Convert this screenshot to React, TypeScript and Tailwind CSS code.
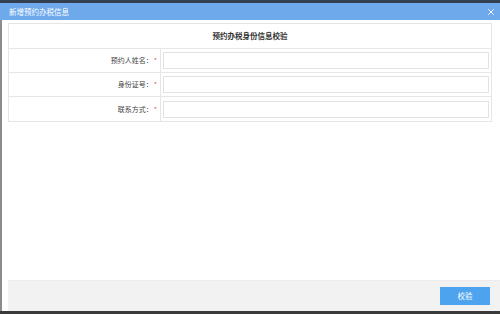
import { X } from 'lucide-react';

const rows = ['预约人姓名：', '身份证号：', '联系方式：'];

export default function App() {
  return (
    <div
      className="w-[500px] h-[314px] flex flex-col bg-white overflow-hidden"
      style={{ fontFamily: '"Noto Sans CJK SC", "Liberation Sans", sans-serif' }}
    >
      <div className="h-[3px] bg-[#34404f]" />
      <div className="h-[17px] flex items-center justify-between pl-[9px] pr-[4px] bg-[#6ea9ec] text-white text-[7.5px]">
        <span>新增预约办税信息</span>
        <X size={10} strokeWidth={2.2} />
      </div>
      <div className="flex-1 flex border-l-[2px] border-[#8c8c8c]">
        <div className="flex-1 flex flex-col">
          <div className="flex-1 pt-[3px] pl-[6px] pr-[8px]">
            <div className="border border-[#e6e6e6]">
              <div className="h-[25px] flex items-center justify-center text-[7.5px] font-bold text-[#333] border-b border-[#e6e6e6]">
                预约办税身份信息校验
              </div>
              {rows.map((label, i) => (
                <div
                  key={label}
                  className={`h-[24px] flex ${i < rows.length - 1 ? 'border-b border-[#e6e6e6]' : ''}`}
                >
                  <div className="w-[152px] flex items-center justify-end pr-[3px] text-[7px] text-[#444] border-r border-[#e6e6e6]">
                    {label}
                    <span className="text-[#e85a5a] ml-[1px]">*</span>
                  </div>
                  <div className="flex-1 flex items-center pl-[2px] pr-[2px]">
                    <div className="w-full h-[17px] border border-[#e2e2e2] bg-white" />
                  </div>
                </div>
              ))}
            </div>
          </div>
          <div className="h-[31px] ml-[6px] bg-[#f2f2f2] flex items-center justify-end pr-[10px] border-t border-[#ececec]">
            <button className="w-[50px] h-[18px] bg-[#4ea3ee] text-white text-[7.5px]">校验</button>
          </div>
        </div>
      </div>
      <div className="h-[3px] bg-[#3a3a3a]" />
    </div>
  );
}
